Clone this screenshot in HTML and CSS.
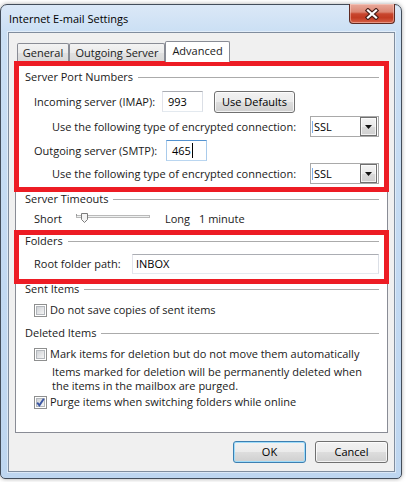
FILE: index.html
```html
<!DOCTYPE html>
<html lang="en">
<head>
<meta charset="utf-8">
<title>Internet E-mail Settings</title>
<link rel="stylesheet" href="styles.css">
</head>
<body>
<div class="window">
  <div class="titlebar">
    <span class="title">Internet E-mail Settings</span>
    <div class="close">
      <svg width="14" height="12" viewBox="0 0 14 12"><path d="M3 2.5 L11 9.5 M11 2.5 L3 9.5" stroke="#4a1f18" stroke-width="4.4" stroke-linecap="square" fill="none"/><path d="M3 2.5 L11 9.5 M11 2.5 L3 9.5" stroke="#fff" stroke-width="2.2" stroke-linecap="square" fill="none"/></svg>
    </div>
  </div>
  <div class="client">
    <div class="tabs">
      <div class="tab w-general">General</div>
      <div class="tab w-outgoing">Outgoing Server</div>
      <div class="tab tab-active w-advanced">Advanced</div>
    </div>
    <div class="panel">
      <div class="group g-ports"><span>Server Port Numbers</span><span class="rule"></span></div>
      <div class="row r-in">
        <span class="lbl l-in">Incoming server (IMAP):</span>
        <div class="field port">993</div>
        <div class="btn btn-defaults">Use Defaults</div>
      </div>
      <div class="row r-enc1 indent">
        <span class="lbl l-enc">Use the following type of encrypted connection:</span>
        <div class="combo"><span class="ibeam"></span><span class="combo-text">SSL</span><span class="drop"><svg width="7" height="4" viewBox="0 0 7 4"><path d="M0 0 H7 L3.5 4 Z" fill="#111"/></svg></span></div>
      </div>
      <div class="row r-out">
        <span class="lbl l-out">Outgoing server (SMTP):</span>
        <div class="field port focused">465<span class="caret"></span></div>
      </div>
      <div class="row r-enc2 indent">
        <span class="lbl l-enc">Use the following type of encrypted connection:</span>
        <div class="combo"><span class="ibeam"></span><span class="combo-text">SSL</span><span class="drop"><svg width="7" height="4" viewBox="0 0 7 4"><path d="M0 0 H7 L3.5 4 Z" fill="#111"/></svg></span></div>
      </div>

      <div class="group g-timeouts"><span>Server Timeouts</span><span class="rule"></span></div>
      <div class="row r-slider">
        <span class="lbl l-short">Short</span>
        <svg class="slider" width="74" height="18" viewBox="0 0 74 18">
          <rect x="0.5" y="5.5" width="73" height="2" fill="#eef0f0" stroke="#b9b9b9"/>
          <path d="M0.5 4 V6" stroke="#9a9a9a"/>
          <path d="M5.5 3.5 H11.5 V9.5 L8.5 12.5 L5.5 9.5 Z" fill="#f4f4f4" stroke="#7c7c7c"/>
        </svg>
        <span class="lbl l-long">Long</span>
        <span class="lbl">1 minute</span>
      </div>

      <div class="group g-folders"><span>Folders</span><span class="rule"></span></div>
      <div class="row r-root">
        <span class="lbl l-root">Root folder path:</span>
        <div class="field root">INBOX</div>
      </div>

      <div class="group g-sent"><span>Sent Items</span><span class="rule"></span></div>
      <div class="row r-check r-sent">
        <svg class="cb" width="13" height="13" viewBox="0 0 13 13"><rect x="0.5" y="0.5" width="12" height="12" fill="#fff" stroke="#8e8f8f"/><defs><linearGradient id="g1" x1="0" y1="0" x2="1" y2="1"><stop offset="0" stop-color="#cdd0d4"/><stop offset="1" stop-color="#f7f7f7"/></linearGradient></defs><rect x="2.5" y="2.5" width="8" height="8" fill="url(#g1)" stroke="#b3b7bc"/></svg>
        <span class="lbl">Do not save copies of sent items</span>
      </div>

      <div class="group g-deleted"><span>Deleted Items</span><span class="rule"></span></div>
      <div class="row r-check r-mark">
        <svg class="cb" width="13" height="13" viewBox="0 0 13 13"><rect x="0.5" y="0.5" width="12" height="12" fill="#fff" stroke="#8e8f8f"/><rect x="2.5" y="2.5" width="8" height="8" fill="url(#g1)" stroke="#b3b7bc"/></svg>
        <span class="lbl">Mark items for deletion but do not move them automatically</span>
      </div>
      <p class="note">Items marked for deletion will be permanently deleted when<br>the items in the mailbox are purged.</p>
      <div class="row r-check r-purge">
        <svg class="cb" width="13" height="13" viewBox="0 0 13 13"><rect x="0.5" y="0.5" width="12" height="12" fill="#fff" stroke="#8e8f8f"/><rect x="2.5" y="2.5" width="8" height="8" fill="url(#g1)" stroke="#b3b7bc"/><path d="M3.2 6.6 L5.4 9.4 L9.8 2.8" fill="none" stroke="#3b56a3" stroke-width="1.9"/></svg>
        <span class="lbl">Purge items when switching folders while online</span>
      </div>
    </div>
    <div class="buttons">
      <div class="btn btn-ok">OK</div>
      <div class="btn btn-cancel">Cancel</div>
    </div>
  </div>
  <div class="mark mark-ports"></div>
  <div class="mark mark-folders"></div>
</div>
</body>
</html>
```

FILE: styles.css
```css
* { box-sizing: border-box; }
html, body { margin: 0; padding: 0; }
body {
  width: 406px;
  height: 482px;
  overflow: hidden;
  background: #ffffff;
  font-family: "Open Sans", "Noto Sans", sans-serif;
  font-size: 11px;
  color: #1a1a1a;
}

.window {
  position: relative;
  margin-top: 4px;
  width: 402px;
  height: 475px;
  border: 1px solid #434d5a;
  border-radius: 7px 7px 5px 5px;
  background: linear-gradient(180deg, #dbe8f7 0%, #cadff4 28px, #c2d9f2 60%, #bed6f0 100%);
  box-shadow: 0 0 4px rgba(0, 0, 0, 0.35);
  padding: 0 6px 6px 7px;
  display: flex;
  flex-direction: column;
}

.titlebar {
  height: 27px;
  display: flex;
  align-items: flex-start;
  flex-shrink: 0;
}
.title {
  padding: 6px 0 0 1px;
  line-height: 16px;
  color: #000;
}
.close {
  margin-left: auto;
  width: 46px;
  height: 20px;
  margin-top: -1px;
  border: 1px solid #5e2a22;
  border-top: none;
  border-radius: 0 0 4px 4px;
  background: linear-gradient(180deg, #e9aa9c 0%, #dc8774 42%, #c8462e 52%, #c23b22 72%, #d66148 100%);
  box-shadow: inset 0 0 0 1px rgba(255, 220, 210, 0.45);
  display: flex;
  align-items: center;
  justify-content: center;
}

.client {
  flex: 1;
  border: 1px solid #808d9e;
  box-shadow: 0 0 0 1px rgba(255, 255, 255, 0.45);
  background: #f0f0f0;
  padding: 8px 6px 0 6px;
  display: flex;
  flex-direction: column;
}

.tabs {
  display: flex;
  align-items: flex-end;
  height: 20px;
  padding-left: 2px;
}
.tab {
  height: 18px;
  border: 1px solid #898c95;
  border-bottom: none;
  border-radius: 2px 2px 0 0;
  background: linear-gradient(180deg, #f3f3f3 0%, #ebebeb 50%, #e1e1e1 51%, #d9d9d9 100%);
  text-align: center;
  padding-top: 1px;
  line-height: 16px;
  color: #1a1a1a;
}
.w-general { width: 52px; }
.w-outgoing { width: 96px; }
.w-advanced { width: 65px; }
.tab-active {
  position: relative;
  z-index: 1;
  height: 21px;
  margin-bottom: -1px;
  background: #ffffff;
}

.panel {
  height: 372px;
  border: 1px solid #898c95;
  background: #ffffff;
  padding: 7px 8px 0 9px;
}

.group {
  display: flex;
  align-items: center;
  height: 16px;
  line-height: 16px;
}
.group .rule {
  flex: 1;
  height: 1px;
  margin-left: 5px;
  background: #ababab;
}
.g-timeouts { margin-top: 7px; }
.g-folders { margin-top: 5px; }
.g-sent { margin-top: 7px; }
.g-deleted { margin-top: 7px; }

.row {
  display: flex;
  align-items: center;
  margin-left: 9px;
  height: 21px;
}
.indent { padding-left: 18px; }
.lbl { line-height: 16px; white-space: nowrap; }

.r-in { margin-top: 6px; height: 22px; align-items: flex-start; }
.r-in .lbl { line-height: 21px; }
.r-enc1 { margin-top: 3px; }
.r-out { margin-top: 3px; }
.r-enc2 { margin-top: 2px; }

.l-in { width: 128px; }
.l-out { width: 132px; }
.l-enc { width: 258px; }

.field {
  height: 21px;
  border: 1px solid;
  border-color: #abadb3 #dbdfe6 #e3e9ef #e2e3ea;
  background: #ffffff;
  padding-left: 5px;
  line-height: 19px;
  color: #000;
  display: flex;
  align-items: center;
}
.port { width: 41px; }
.focused { border-color: #5593d0 #a9cbeb #bad6f0 #a9cbeb; }
.caret {
  display: inline-block;
  width: 1px;
  height: 15px;
  margin-left: 1px;
  background: #000;
}

.btn {
  height: 22px;
  border: 1px solid #707070;
  border-radius: 3px;
  background: linear-gradient(180deg, #f2f2f2 0%, #ebebeb 48%, #dddddd 52%, #cfcfcf 100%);
  box-shadow: inset 0 0 0 1px rgba(255, 255, 255, 0.75);
  text-align: center;
  line-height: 20px;
  color: #000;
}
.btn-defaults { width: 81px; margin-left: 11px; }

.combo {
  width: 69px;
  height: 21px;
  border: 1px solid #a9a9a9;
  background: #fff;
  display: flex;
  align-items: center;
}
.ibeam {
  width: 1px;
  height: 12px;
  margin-left: 1px;
  background: #7cadea;
}
.combo-text { margin-left: 1px; line-height: 16px; color: #000; }
.drop {
  margin-left: auto;
  margin-right: 1px;
  width: 17px;
  height: 19px;
  border: 1px solid #6f6f6f;
  background: linear-gradient(180deg, #f4f4f4 0%, #e9e9e9 50%, #dadada 51%, #d0d0d0 100%);
  box-shadow: inset 0 0 0 1px rgba(255, 255, 255, 0.7);
  display: flex;
  align-items: center;
  justify-content: center;
}

.r-slider { margin-top: 3px; height: 18px; }
.l-short { width: 42px; }
.slider { display: block; flex-shrink: 0; }
.l-long { width: 34px; margin-left: 15px; }

.r-root { margin-top: 5px; height: 20px; }
.l-root { width: 98px; }
.root { flex: 1; height: 20px; padding-left: 3px; line-height: 18px; }

.r-check { height: 16px; }
.cb { display: block; flex-shrink: 0; margin-right: 3px; }
.r-sent { margin-top: 5px; }
.r-mark { margin-top: 5px; }
.note {
  margin: 3px 0 0 27px;
  line-height: 14px;
}
.r-purge { margin-top: 1px; }

.buttons {
  display: flex;
  justify-content: flex-end;
  gap: 9px;
  margin-top: 8px;
}
.btn-ok,
.btn-cancel { width: 73px; }
.btn-ok {
  border-color: #3c7fb1;
  box-shadow: inset 0 0 0 1px #9fdcfa;
}

.mark {
  position: absolute;
  left: 13px;
  width: 375px;
  border: 5px solid #ed1c24;
  pointer-events: none;
}
.mark-ports { top: 56px; height: 131px; }
.mark-folders { top: 225px; height: 54px; }
```
